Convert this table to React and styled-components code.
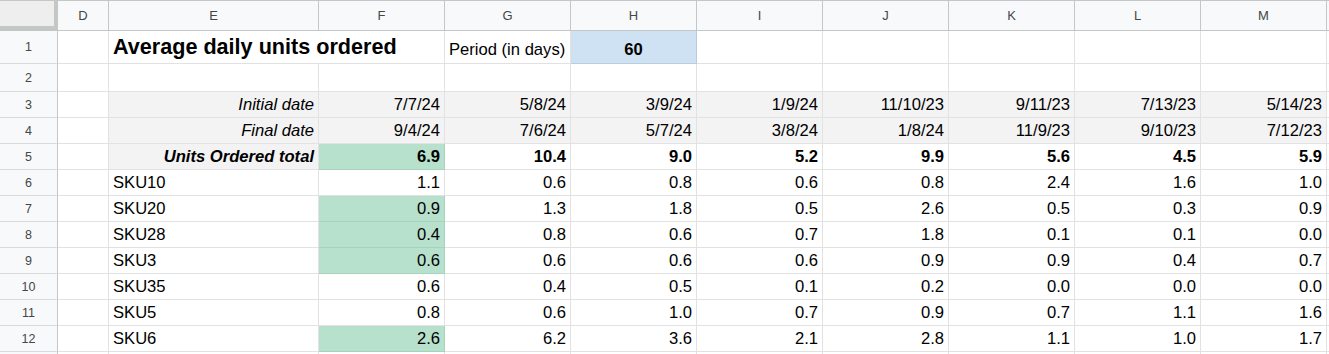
import styled, { createGlobalStyle } from "styled-components";

/* ---------- DATA ---------- */

const COLUMNS = ["D", "E", "F", "G", "H", "I", "J", "K", "L", "M"];

const initialDates = ["7/7/24", "5/8/24", "3/9/24", "1/9/24", "11/10/23", "9/11/23", "7/13/23", "5/14/23"];
const finalDates = ["9/4/24", "7/6/24", "5/7/24", "3/8/24", "1/8/24", "11/9/23", "9/10/23", "7/12/23"];
const totals = ["6.9", "10.4", "9.0", "5.2", "9.9", "5.6", "4.5", "5.9"];

const skus = [
  { name: "SKU10", values: ["1.1", "0.6", "0.8", "0.6", "0.8", "2.4", "1.6", "1.0"], hot: false },
  { name: "SKU20", values: ["0.9", "1.3", "1.8", "0.5", "2.6", "0.5", "0.3", "0.9"], hot: true },
  { name: "SKU28", values: ["0.4", "0.8", "0.6", "0.7", "1.8", "0.1", "0.1", "0.0"], hot: true },
  { name: "SKU3", values: ["0.6", "0.6", "0.6", "0.6", "0.9", "0.9", "0.4", "0.7"], hot: true },
  { name: "SKU35", values: ["0.6", "0.4", "0.5", "0.1", "0.2", "0.0", "0.0", "0.0"], hot: false },
  { name: "SKU5", values: ["0.8", "0.6", "1.0", "0.7", "0.9", "0.7", "1.1", "1.6"], hot: false },
  { name: "SKU6", values: ["2.6", "6.2", "3.6", "2.1", "2.8", "1.1", "1.0", "1.7"], hot: true },
];

const GRAY = "#f3f3f3";
const GREEN = "#b7e1cd";
const BLUE = "#cfe2f3";

/* ---------- STYLES ---------- */

const GlobalStyle = createGlobalStyle`
  html, body {
    margin: 0;
    padding: 0;
    background: #fff;
    overflow: hidden;
  }
  body {
    font-family: "Liberation Sans", Arial, sans-serif;
  }
`;

const Sheet = styled.div`
  display: grid;
  grid-template-columns: 58px 51px 210px repeat(8, 126px) 1fr;
  grid-template-rows: 31px 33px 28px repeat(10, 26px) 1fr;
  height: 100vh;
  width: 100vw;
  color: #000;
`;

const Corner = styled.div`
  background: #eeeeee;
  border-top: 1px solid #c4c7c5;
  border-right: 4px solid #c4c7c5;
  border-bottom: 5px solid #c4c7c5;
`;

const ColHeader = styled.div`
  display: flex;
  align-items: center;
  justify-content: center;
  background: #f8f9fa;
  border-top: 1px solid #c4c7c5;
  border-right: 1px solid #c4c7c5;
  border-bottom: 1px solid #c4c7c5;
  font-size: 13px;
  color: #444746;
`;

const RowHeader = styled.div`
  display: flex;
  align-items: center;
  justify-content: center;
  background: #f8f9fa;
  border-right: 1px solid #c4c7c5;
  border-bottom: 1px solid #d9d9d9;
  font-size: 12.5px;
  color: #444746;
`;

const Cell = styled.div`
  display: flex;
  align-items: flex-end;
  justify-content: ${({ $align }) =>
    $align === "right" ? "flex-end" : $align === "center" ? "center" : "flex-start"};
  grid-column: span ${({ $span }) => $span || 1};
  padding: 0 4px ${({ $pb }) => ($pb !== undefined ? $pb : 2)}px;
  background: ${({ $bg }) => $bg || "#fff"};
  border-right: 1px solid ${({ $line }) => $line || "#e2e2e3"};
  border-bottom: 1px solid ${({ $line }) => $line || "#e2e2e3"};
  font-size: ${({ $size }) => $size || 16.6}px;
  font-weight: ${({ $bold }) => ($bold ? 700 : 400)};
  font-style: ${({ $italic }) => ($italic ? "italic" : "normal")};
  line-height: normal;
  white-space: nowrap;
  overflow: hidden;
  min-width: 0;
`;

/* ---------- COMPONENT ---------- */

function Row({ n, children }) {
  return (
    <>
      <RowHeader>{n}</RowHeader>
      {children}
      <Cell />
    </>
  );
}

export default function App() {
  return (
    <>
      <GlobalStyle />
      <Sheet>
        <Corner />
        {COLUMNS.map((c) => (
          <ColHeader key={c}>{c}</ColHeader>
        ))}
        <ColHeader />

        <Row n={1}>
          <Cell $pb={3} />
          <Cell $span={2} $size={21.6} $bold $pb={3}>
            Average daily units ordered
          </Cell>
          <Cell $pb={3}>Period (in days)</Cell>
          <Cell $bg={BLUE} $line="#b9cde0" $align="center" $bold $pb={3}>
            60
          </Cell>
          {[0, 1, 2, 3, 4].map((i) => (
            <Cell key={i} />
          ))}
        </Row>

        <Row n={2}>
          {COLUMNS.map((c) => (
            <Cell key={c} />
          ))}
        </Row>

        <Row n={3}>
          <Cell />
          <Cell $bg={GRAY} $align="right" $italic>
            Initial date
          </Cell>
          {initialDates.map((d, i) => (
            <Cell key={i} $bg={GRAY} $align="right">
              {d}
            </Cell>
          ))}
        </Row>

        <Row n={4}>
          <Cell />
          <Cell $bg={GRAY} $align="right" $italic>
            Final date
          </Cell>
          {finalDates.map((d, i) => (
            <Cell key={i} $bg={GRAY} $align="right">
              {d}
            </Cell>
          ))}
        </Row>

        <Row n={5}>
          <Cell />
          <Cell $bg={GRAY} $align="right" $italic $bold>
            Units Ordered total
          </Cell>
          {totals.map((v, i) => (
            <Cell
              key={i}
              $bg={i === 0 ? GREEN : undefined}
              $line={i === 0 ? "#a6d3bd" : undefined}
              $align="right"
              $bold
            >
              {v}
            </Cell>
          ))}
        </Row>

        {skus.map((sku, r) => (
          <Row key={sku.name} n={r + 6}>
            <Cell />
            <Cell>{sku.name}</Cell>
            {sku.values.map((v, i) => (
              <Cell
                key={i}
                $bg={i === 0 && sku.hot ? GREEN : undefined}
                $line={i === 0 && sku.hot ? "#a6d3bd" : undefined}
                $align="right"
              >
                {v}
              </Cell>
            ))}
          </Row>
        ))}

        <Row>
          {COLUMNS.map((c) => (
            <Cell key={c} />
          ))}
        </Row>
      </Sheet>
    </>
  );
}
